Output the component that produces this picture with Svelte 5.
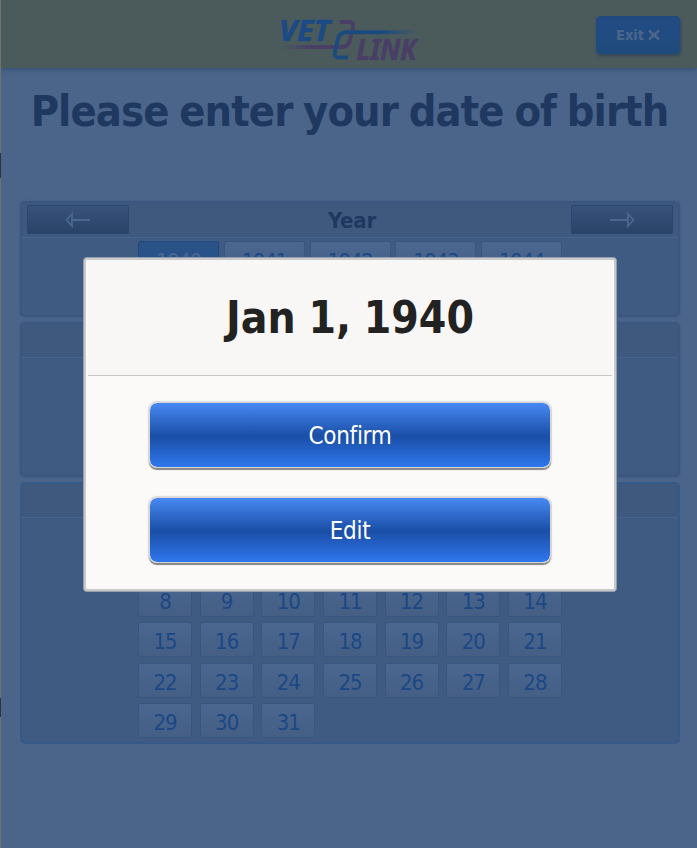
<script>
  const years = [1940, 1941, 1942, 1943, 1944];
  const days = Array.from({ length: 31 }, (_, i) => i + 1);
</script>

<div class="page">
  <header>
    <svg class="logo" width="170" height="64" viewBox="265 4 170 64" aria-label="Vet Link">
      <defs>
        <linearGradient id="purpleFade" gradientUnits="userSpaceOnUse" x1="279" y1="0" x2="312" y2="0">
          <stop offset="0" stop-color="#493e66" stop-opacity="0" />
          <stop offset="1" stop-color="#493e66" />
        </linearGradient>
        <linearGradient id="blueFade" gradientUnits="userSpaceOnUse" x1="382" y1="0" x2="418" y2="0">
          <stop offset="0" stop-color="#1b4a80" />
          <stop offset="1" stop-color="#1b4a80" stop-opacity="0" />
        </linearGradient>
      </defs>
      <text x="279" y="41" textLength="51" lengthAdjust="spacingAndGlyphs" fill="#1b4a84" stroke="#1b4a84">VET</text>
      <text x="356.5" y="59.5" textLength="60" lengthAdjust="spacingAndGlyphs" fill="#493e66" stroke="#493e66">LINK</text>
      <g fill="none" stroke-width="4">
        <path d="M340 22H349Q354 22 353 27L350 40Q348.500 47 342 47H281" stroke="url(#purpleFade)" />
        <path d="M348 57.500H338Q334 57.500 335 52L338 39Q339.500 32.300 346 32.300H417" stroke="url(#blueFade)" />
      </g>
    </svg>
    <button class="exit">Exit <svg width="12" height="12" viewBox="0 0 12 12"><path d="M1 1.500L11 10.500M11 1.500L1 10.500" stroke="#4b6689" stroke-width="2.500" /></svg></button>
  </header>

  <h1><span>Please enter your date of birth</span></h1>

  <main>
    <section class="panel year">
      <div class="bar">
        <button class="arrow" aria-label="Previous">
          <svg width="26" height="16" viewBox="0 0 26 16"><path d="M25 8H7M7 2L1.500 8L7 14Z" /></svg>
        </button>
        <h2>Year</h2>
        <button class="arrow" aria-label="Next">
          <svg width="26" height="16" viewBox="0 0 26 16"><path d="M1 8H19M19 2L24.500 8L19 14Z" /></svg>
        </button>
      </div>
      <div class="years">
        {#each years as year}
          <button class="cell" class:selected={year === 1940}>{year}</button>
        {/each}
      </div>
    </section>
    <section class="panel month"><div class="bar"></div></section>
    <section class="panel day">
      <div class="bar"></div>
      <div class="days">
        {#each days as day}
          <button class="cell">{day}</button>
        {/each}
      </div>
    </section>
  </main>

  <div class="edge"><i></i><i></i></div>

  <div class="dialog" role="dialog">
    <div class="dialog-head"><span>Jan 1, 1940</span></div>
    <div class="actions">
      <button>Confirm</button>
      <button>Edit</button>
    </div>
  </div>
</div>

<style>
  :global(body) { margin: 0; background: #4b658a; }
  * { box-sizing: border-box; }
  button { margin: 0; padding: 0; font-family: inherit; }
  .page {
    position: relative;
    width: 697px;
    height: 848px;
    overflow: hidden;
    background: #4b658a;
    font-family: "DejaVu Sans Condensed", "DejaVu Sans", sans-serif;
    font-stretch: condensed;
  }
  header {
    position: relative;
    height: 68px;
    display: flex;
    justify-content: flex-end;
    padding: 16px 17px 0 0;
    background: #4b5b5c;
    box-shadow: 0 1px 5px #2e4a72;
  }
  .logo { position: absolute; left: 265px; top: 4px; overflow: visible; }
  .logo text { font: italic 700 29px "Noto Sans", sans-serif; stroke-width: 0.6px; }
  .exit {
    width: 84px;
    height: 38px;
    border: 1px solid #1f4a80;
    border-radius: 4px;
    background: linear-gradient(#224b82, #204c83 50%, #1d497a);
    box-shadow: 1px 2px 3px #34465b;
    color: #4b6689;
    font-size: 14.5px;
    font-weight: 700;
    display: flex;
    align-items: center;
    justify-content: center;
    gap: 4px;
  }
  h1 {
    margin: 0;
    height: 133px;
    padding: 15px 0 0 2px;
    display: flex;
    justify-content: center;
    color: #1e3860;
    font-size: 43px;
    line-height: 56px;
    white-space: nowrap;
    letter-spacing: -0.9px;
    word-spacing: -1.8px;
  }
  main { display: flex; flex-direction: column; gap: 5px; padding: 0 17px 0 20px; }
  .panel {
    border: 2px solid #3b5780;
    border-radius: 5px;
    background: #3f5b81;
    box-shadow: 0 0 3px #3d5980;
  }
  .year { height: 116px; }
  .month { height: 155px; }
  .day { height: 262px; border-color: #355a8a; box-shadow: none; }
  .bar {
    height: 35px;
    display: flex;
    justify-content: space-between;
    align-items: flex-start;
    padding: 2px 5px 0;
    border-bottom: 1px solid #46648d;
    background: #3f597e;
  }
  .month .bar, .day .bar { height: 34px; }
  h2 { margin: 0; padding: 1px 0 0 4px; color: #1e3860; font-size: 22px; line-height: 30px; letter-spacing: -0.2px; }
  .arrow {
    width: 102px;
    height: 29px;
    border: 1px solid #2a456f;
    border-radius: 2px;
    background: linear-gradient(#38527b, #294368);
    display: flex;
    align-items: center;
    justify-content: center;
  }
  .arrow path { fill: none; stroke: #4b678e; stroke-width: 1.8; }
  .years, .days { width: 424px; margin: 0 0 0 116px; display: grid; }
  .years { grid-template-columns: repeat(5, 81px); justify-content: space-between; padding-top: 3px; }
  .days {
    grid-template-columns: repeat(7, 54px);
    grid-auto-rows: 35px;
    justify-content: space-between;
    row-gap: 5.6px;
    padding-top: 23px;
  }
  .cell {
    height: 35px;
    border: 1px solid #375681;
    border-radius: 2px;
    background: linear-gradient(#4b6790, #445e84);
    color: #1b4884;
    font-size: 22px;
    line-height: 36px;
    letter-spacing: -1px;
  }
  .years .cell { height: 41px; line-height: 35px; letter-spacing: -1.3px; }
  .days .cell { padding-top: 1px; }
  .cell.selected { background: linear-gradient(#2b5285, #205190); border-color: #1d4881; color: #4b678f; }
  .edge {
    position: absolute;
    left: 0;
    top: 0;
    width: 1px;
    height: 848px;
    padding-top: 153px;
    display: flex;
    flex-direction: column;
    gap: 520px;
    background: #73736c;
  }
  .edge i { height: 25px; background: #30343a; }
  .edge i + i { height: 19px; }
  .dialog {
    position: absolute;
    left: 83px;
    top: 257px;
    width: 534px;
    height: 335px;
    border: 1px solid #929eae;
    border-radius: 4px;
    background: #fbfaf8;
    box-shadow: inset 0 0 0 2px #c9c9c9;
    padding: 2px 4px;
  }
  .dialog-head {
    height: 116px;
    display: flex;
    justify-content: center;
    background: #f8f7f5;
    border-bottom: 1px solid #c9c9c9;
    color: #222;
    font-size: 44px;
    font-weight: 700;
    line-height: 115px;
    white-space: nowrap;
    letter-spacing: 0;
    word-spacing: -1px;
  }
  .actions { display: flex; flex-direction: column; align-items: center; gap: 29px; padding-top: 26px; }
  .actions button {
    width: 402px;
    height: 66px;
    padding-top: 2px;
    border: 1px solid #d6d6d6;
    border-radius: 8px;
    background: linear-gradient(#4889f2, #1b50a9 50%, #1b50a9 54%, #2f77ee);
    background-clip: padding-box;
    box-shadow: 0 2px 1px #858585, 0 0 2px #999;
    color: #fff;
    font-size: 24px;
    letter-spacing: -0.3px;
  }
</style>
